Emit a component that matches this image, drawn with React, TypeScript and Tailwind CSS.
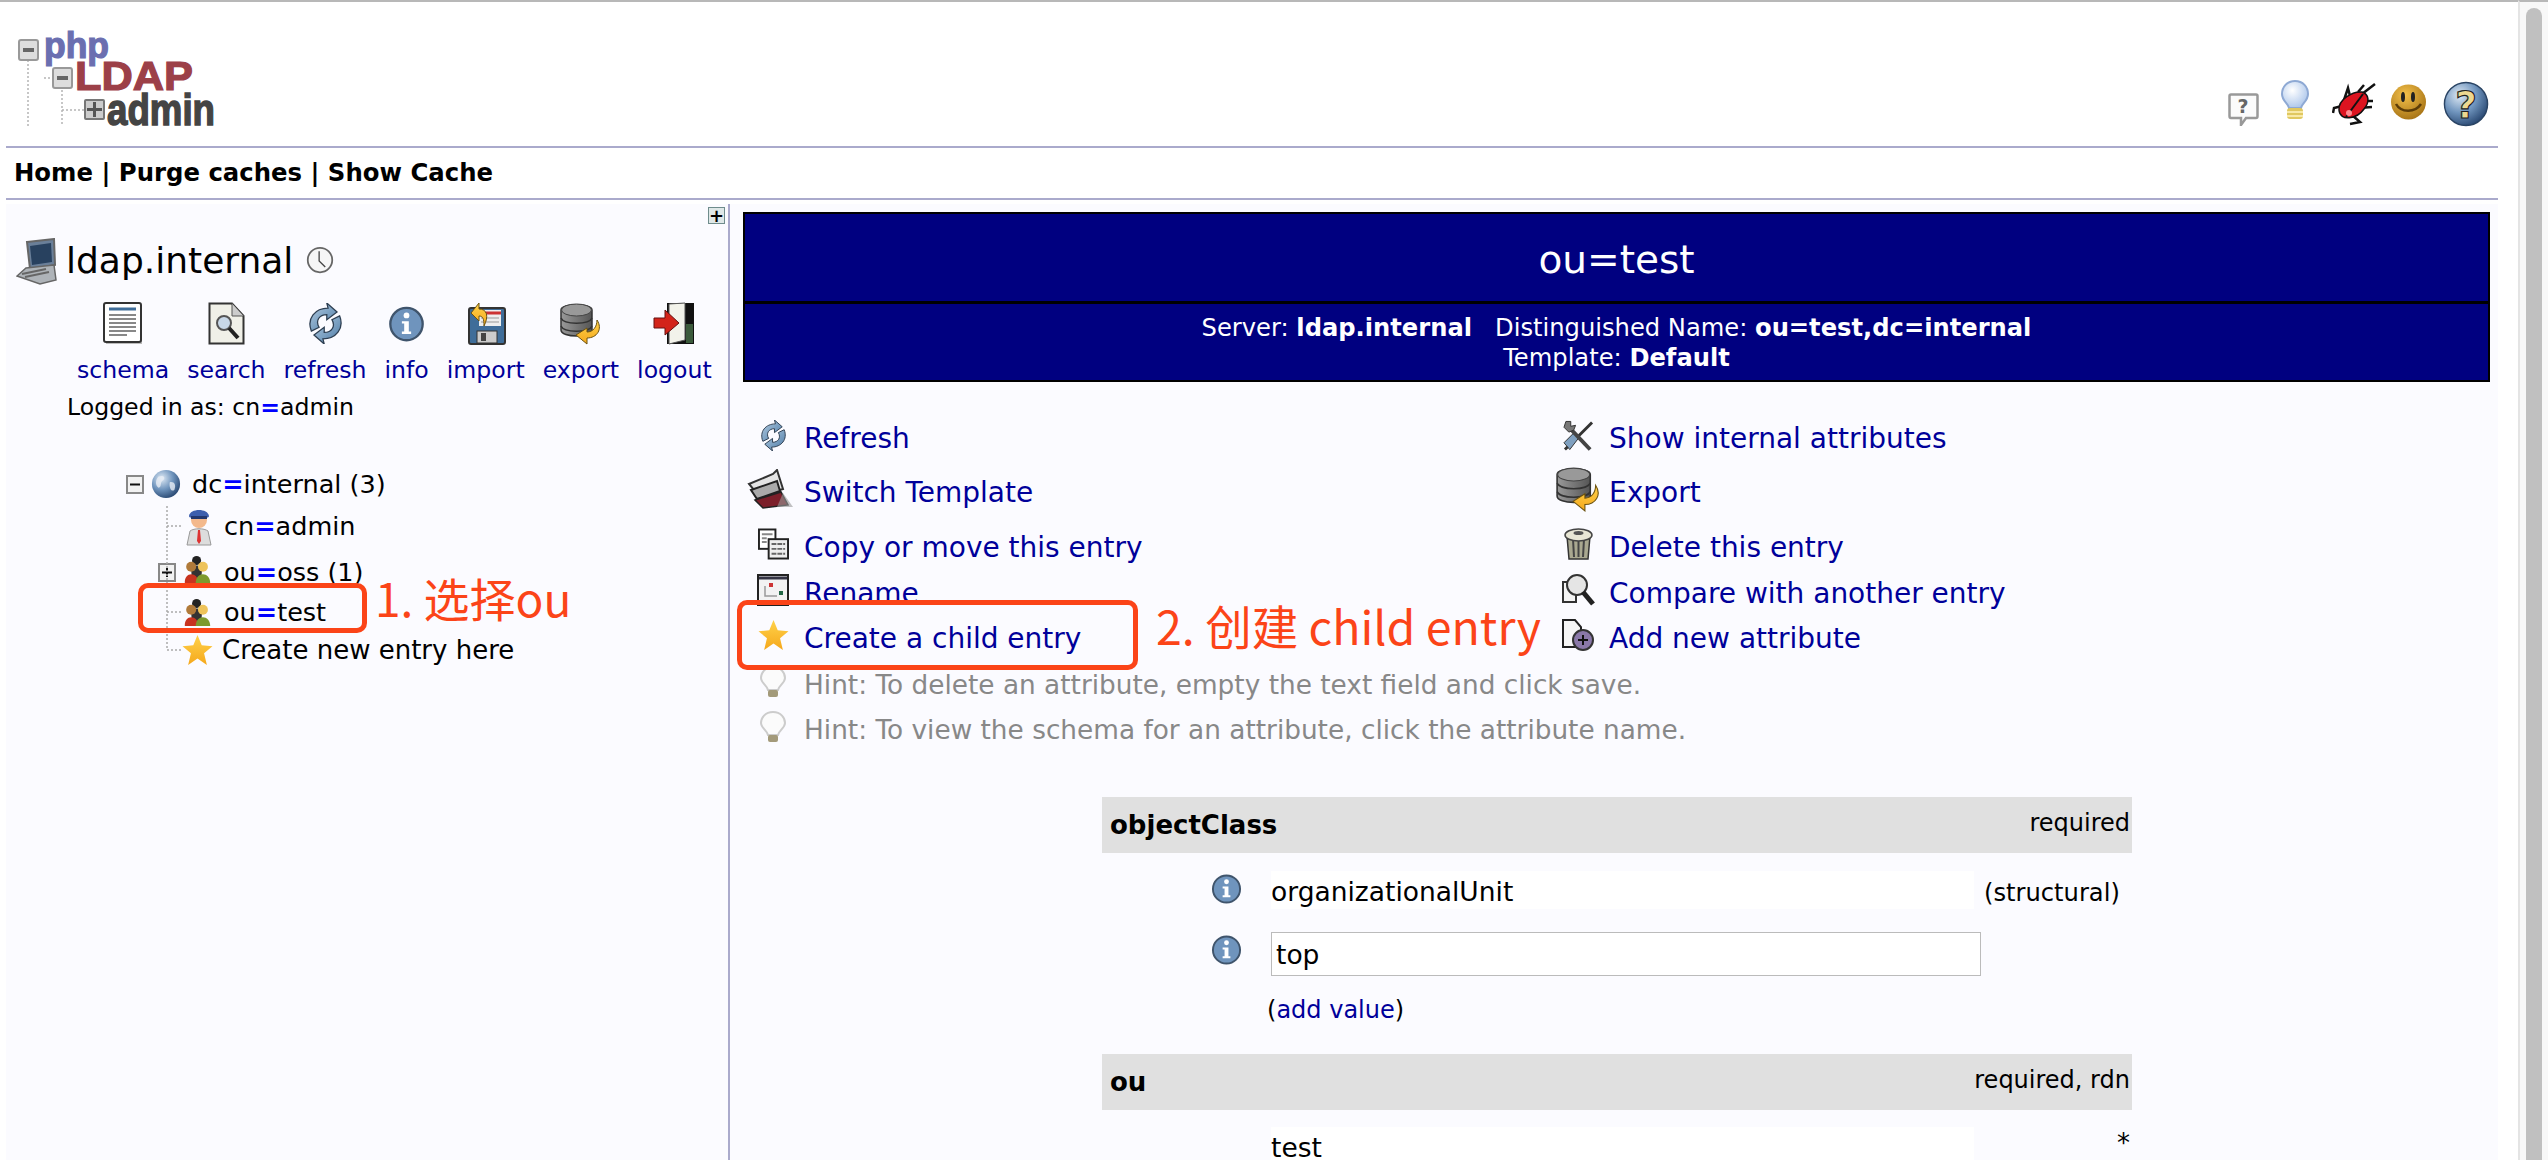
import type { ReactNode } from 'react';

const Dotted = ({ d }: { d: string }) => <path d={d} fill="none" stroke="#b5b5b5" strokeWidth="1.5" strokeDasharray="2 2" />;

function Logo() {
  return (
    <svg width="200" height="112" viewBox="0 -8 200 112" className="block">
      <Dotted d="M10 28V94M26 46H36M44 58V94M44 78H66" />
      <rect x="1" y="8" width="19" height="20" rx="2" fill="#ddd" stroke="#999" strokeWidth="2" />
      <rect x="5" y="16" width="11" height="4" fill="#666" />
      <text x="26" y="26" textLength="65" lengthAdjust="spacingAndGlyphs" fontFamily="Liberation Sans, sans-serif" fontWeight="700" fontSize="36" fill="#6b6fb0" stroke="#6b6fb0" strokeWidth="1.200">php</text>
      <rect x="35" y="36" width="19" height="20" rx="2" fill="#ddd" stroke="#999" strokeWidth="2" />
      <rect x="39" y="44" width="11" height="4" fill="#666" />
      <text x="57" y="58" textLength="118" lengthAdjust="spacingAndGlyphs" fontFamily="Liberation Sans, sans-serif" fontWeight="700" fontSize="41" fill="#9c4048" stroke="#9c4048" strokeWidth="1.200">LDAP</text>
      <rect x="67" y="68" width="19" height="19" rx="1" fill="#ccc" stroke="#777" strokeWidth="2" />
      <path d="M76.500 70V85M69 77.500H84" stroke="#555" strokeWidth="3" />
      <text x="89" y="93" textLength="108" lengthAdjust="spacingAndGlyphs" fontFamily="Liberation Sans, sans-serif" fontWeight="700" fontSize="45" fill="#444" stroke="#444" strokeWidth="1.500">admin</text>
    </svg>
  );
}

function Grads() {
  return (
    <svg width="0" height="0" className="absolute">
      <defs>
        <linearGradient id="blueG" x1="0" y1="0" x2="1" y2="1"><stop offset="0" stopColor="#b4cde2" /><stop offset="1" stopColor="#4a79a5" /></linearGradient>
        <linearGradient id="grayG" x1="0" y1="0" x2="1" y2="0"><stop offset="0" stopColor="#999" /><stop offset="1" stopColor="#555" /></linearGradient>
        <linearGradient id="goldG" x1="0" y1="0" x2="0" y2="1"><stop offset="0" stopColor="#ffd24a" /><stop offset="1" stopColor="#f5a81c" /></linearGradient>
        <radialGradient id="globeG" cx=".35" cy=".3" r=".8"><stop offset="0" stopColor="#dfeaf5" /><stop offset=".5" stopColor="#6f94bd" /><stop offset="1" stopColor="#1e3c66" /></radialGradient>
        <radialGradient id="smileG" cx=".4" cy=".3" r=".8"><stop offset="0" stopColor="#f3c04a" /><stop offset="1" stopColor="#a06c10" /></radialGradient>
        <radialGradient id="bulbG" cx=".4" cy=".35" r=".7"><stop offset="0" stopColor="#fff" /><stop offset="1" stopColor="#a9c4ea" /></radialGradient>
      </defs>
    </svg>
  );
}

const Ico = ({ w, h, vb, children, className }: { w: number; h: number; vb?: string; children: ReactNode; className?: string }) => (
  <svg width={w} height={h} viewBox={vb ?? '0 0 32 32'} className={`block shrink-0 ${className ?? ''}`}>{children}</svg>
);

const LaptopIcon = () => (
  <Ico w={41} h={47} vb="0 0 41 47">
    <path d="M11 4 38 1 39 27 14 31Z" fill="#6a7f99" stroke="#666" strokeWidth="2" />
    <path d="M14 8 35 5 36 24 16 27Z" fill="#28415f" />
    <path d="M10 30 38 27 40 42 24 46 1 38Z" fill="#aeb3b8" stroke="#666" strokeWidth="1.500" />
    <path d="M6 36 30 31M9 39 33 34" stroke="#666" strokeWidth="2" />
  </Ico>
);
const ClockIcon = () => (
  <Ico w={30} h={28}>
    <circle cx="16" cy="16" r="14" fill="#f6f6f6" stroke="#666" strokeWidth="2" />
    <path d="M15 6V17L22 24" fill="none" stroke="#444" strokeWidth="1.500" />
  </Ico>
);
const SchemaIcon = () => (
  <Ico w={41} h={43} vb="0 0 41 43">
    <rect x="3" y="3" width="36" height="39" fill="#bbb" />
    <rect x="1" y="1" width="37" height="39" rx="2" fill="#fff" stroke="#333" strokeWidth="2" />
    <path d="M6 7H33" stroke="#3f6d99" strokeWidth="3" />
    <path d="M6 13H33M6 17H33M6 21H33M6 25H33M6 29H33M6 33H24" stroke="#888" strokeWidth="2" />
  </Ico>
);
const SearchDocIcon = () => (
  <Ico w={37} h={43} vb="0 0 37 43">
    <path d="M1.500 1.500H24L35.500 14V41.500H1.500Z" fill="#f0f0e8" stroke="#333" strokeWidth="2" />
    <path d="M24 1.500V14H35.500" fill="#ccc" stroke="#555" />
    <circle cx="16" cy="21" r="7" fill="#c8d8e8" stroke="#555" strokeWidth="2" />
    <path d="M21 26 30 36" stroke="#222" strokeWidth="4" />
  </Ico>
);
const RefreshIcon = ({ w = 41, h = 41 }: { w?: number; h?: number }) => (
  <Ico w={w} h={h}>
    <path d="M5 22C1 12 8 4 18 4L17 0 25 7 17 13 17 9C11 9 8 14 11 19Z" fill="url(#blueG)" stroke="#2e3f52" strokeWidth="1" />
    <path d="M27 10C31 20 24 28 14 28L15 32 7 25 15 19 15 23C21 23 24 18 21 13Z" fill="url(#blueG)" stroke="#2e3f52" strokeWidth="1" />
  </Ico>
);
const InfoIcon = ({ w = 37, h = 37 }: { w?: number; h?: number }) => (
  <Ico w={w} h={h}>
    <circle cx="16" cy="16.500" r="14" fill="#6f94bd" stroke="#3f546c" strokeWidth="2" />
    <circle cx="16" cy="9" r="2.500" fill="#fff" />
    <path d="M12 14H18V23H20V25H12V23H14V16H12Z" fill="#fff" />
  </Ico>
);
const ImportIcon = () => (
  <Ico w={42} h={43} vb="0 0 42 43">
    <rect x="4" y="6" width="36" height="36" rx="2" fill="#3f6d99" stroke="#333" strokeWidth="2" />
    <rect x="14" y="8" width="22" height="16" fill="#eee" />
    <path d="M14 11H36" stroke="#c33" strokeWidth="3" />
    <path d="M16 16H34M16 20H34" stroke="#999" />
    <rect x="12" y="29" width="20" height="12" fill="#ccc" stroke="#333" />
    <rect x="16" y="31" width="5" height="8" fill="#444" />
    <path d="M6 11 14 1 14 7C22 7 24 14 19 24 19 17 18 14 14 14V19Z" fill="url(#goldG)" stroke="#6b5210" strokeWidth="1" />
  </Ico>
);
const ExportIcon = ({ w = 42, h = 43 }: { w?: number; h?: number }) => (
  <Ico w={w} h={h} vb="0 0 42 43">
    <path d="M1 8C1 1 32 1 32 8V28C32 36 1 36 1 28Z" fill="url(#grayG)" stroke="#333" strokeWidth="1.500" />
    <ellipse cx="16.500" cy="8" rx="15" ry="6" fill="#999" stroke="#444" />
    <path d="M1 16C4 23 29 23 32 16M1 24C4 31 29 31 32 24" fill="none" stroke="#333" strokeWidth="1.500" />
    <path d="M37 18C43 27 37 36 27 36V42L16 33 27 26V30C33 30 37 25 37 18Z" fill="url(#goldG)" stroke="#6b5210" strokeWidth="1" />
  </Ico>
);
const LogoutIcon = () => (
  <Ico w={42} h={43} vb="0 0 42 43">
    <rect x="14" y="1" width="27" height="41" fill="#111" />
    <path d="M16 2 32 1V38L16 42Z" fill="#f2f2ea" stroke="#555" />
    <path d="M33 22H40V41H33Z" fill="#3b5a3b" />
    <path d="M1 16H12V8L26 21 12 33V26H1Z" fill="#d3241a" stroke="#611" />
  </Ico>
);
const BoxIcon = ({ plus }: { plus?: boolean }) => (
  <Ico w={18} h={19} vb="0 0 18 19">
    <rect x="1" y="1" width="16" height="17" fill="#f2f2f2" stroke="#888" strokeWidth="2" />
    <path d={plus ? 'M4 9.500H14M9 5V14' : 'M4 9.500H14'} stroke="#111" strokeWidth="2" />
  </Ico>
);
const GlobeIcon = () => (
  <Ico w={30} h={30}>
    <circle cx="16" cy="16" r="15" fill="url(#globeG)" />
    <path d="M8 8C13 6 16 9 13 12 9 14 12 19 8 20 4 17 5 11 8 8ZM20 14C25 13 27 17 25 22 22 25 19 20 20 14Z" fill="#e8eef5" opacity=".8" />
  </Ico>
);
const PersonIcon = () => (
  <Ico w={26} h={39} vb="0 0 26 39">
    <path d="M4 24C8 21 18 21 22 24L25 38H1Z" fill="#ddd" stroke="#999" />
    <path d="M12 23H14L15 34 13 37 11 34Z" fill="#d33" />
    <circle cx="13" cy="13" r="8" fill="#f3b98c" />
    <path d="M3 9C4 1 22 1 23 9 23 12 18 10 13 10 8 10 3 12 3 9Z" fill="#3d5fae" />
    <rect x="5" y="9" width="16" height="3" fill="#23386f" />
  </Ico>
);
const PeopleIcon = () => (
  <Ico w={29} h={29}>
    <circle cx="15" cy="6" r="5" fill="#222" />
    <path d="M9 16C9 10 21 10 21 16L20 28H10Z" fill="#333" />
    <circle cx="9" cy="13" r="5.500" fill="#b07a3a" />
    <path d="M2 31C1 18 17 18 17 31Z" fill="#c8331f" />
    <circle cx="22" cy="13" r="5.500" fill="#eec35a" />
    <path d="M14 31C14 18 30 18 30 31Z" fill="#7d9a2d" />
  </Ico>
);
const StarIcon = () => (
  <Ico w={31} h={30}>
    <path d="M16 0 20.500 11 32 12 23 19.500 26 32 16 25 6 32 9 19.500 0 12 11.500 11Z" fill="url(#goldG)" />
  </Ico>
);
const TemplateIcon = () => (
  <Ico w={47} h={40} vb="0 0 47 40" className="-ml-[5px]">
    <path d="M2 15 26 5 30 1 36 20 12 27Z" fill="#e4e4e4" stroke="#333" strokeWidth="2" />
    <path d="M4 21 30 12 33 22 10 30Z" fill="#aaa" stroke="#222" strokeWidth="2" />
    <path d="M8 31 34 23 41 36 16 39Z" fill="#7c1f2a" stroke="#222" strokeWidth="1.500" />
    <path d="M36 24 46 38H30Z" fill="#999" opacity=".6" />
  </Ico>
);
const CopyIcon = () => (
  <Ico w={31} h={32}>
    <rect x="1" y="1" width="17" height="20" fill="#fff" stroke="#222" strokeWidth="2" />
    <path d="M4 6H15M4 10H9M4 14H9" stroke="#888" strokeWidth="2" />
    <rect x="11" y="11" width="20" height="20" fill="#eee" stroke="#222" strokeWidth="2" />
    <path d="M14 16H28M14 21H28M14 26H28" stroke="#666" strokeWidth="2" strokeDasharray="5 1" />
  </Ico>
);
const RenameIcon = () => (
  <Ico w={32} h={32}>
    <rect x="1" y="1" width="30" height="30" fill="#f2f2f2" stroke="#222" strokeWidth="2" />
    <path d="M2 4H30" stroke="#334" strokeWidth="3" />
    <rect x="12" y="9" width="4" height="4" fill="#c33" />
    <rect x="22" y="17" width="4" height="4" fill="#264" />
    <path d="M8 12V22H20" fill="none" stroke="#999" strokeWidth="1.500" />
  </Ico>
);
const BulbIcon = () => (
  <Ico w={26} h={32} vb="0 0 26 32">
    <path d="M13 1C5 1 1 7 1 12 1 17 7 19 8 24H18C19 19 25 17 25 12 25 7 21 1 13 1Z" fill="#fbfbfb" stroke="#ccc" strokeWidth="2" />
    <rect x="8" y="24" width="10" height="7" rx="2" fill="#a39a7a" />
  </Ico>
);
const ToolsIcon = () => (
  <Ico w={31} h={32}>
    <path d="M2 31 30 3" stroke="#333" strokeWidth="3" />
    <path d="M1 24 12 13 17 18 7 31Z" fill="#7fa0c0" stroke="#333" />
    <path d="M28 31 8 10" stroke="#444" strokeWidth="4" />
    <path d="M8 2 3 2 1 8 6 13 11 11 13 6 8 7Z" fill="#777" stroke="#333" />
  </Ico>
);
const TrashIcon = () => (
  <Ico w={29} h={32} vb="0 0 29 32">
    <path d="M3 8H26L24 31H5Z" fill="#a9a890" stroke="#333" strokeWidth="1.500" />
    <path d="M9 11 10 29M14.500 11V29M20 11 19 29" stroke="#444" strokeWidth="2" />
    <ellipse cx="14.500" cy="7" rx="13.500" ry="6" fill="#e8e6d5" stroke="#444" strokeWidth="1.500" />
    <ellipse cx="14.500" cy="5" rx="5" ry="2" fill="#555" />
  </Ico>
);
const CompareIcon = () => (
  <Ico w={33} h={32} vb="0 0 33 32">
    <path d="M1 8H14V28H1Z" fill="#f4f4f4" stroke="#333" strokeWidth="2" />
    <circle cx="15" cy="11" r="10" fill="#e5e5e5" stroke="#333" strokeWidth="2" />
    <path d="M21 18 31 30" stroke="#222" strokeWidth="5" />
  </Ico>
);
const AddAttrIcon = () => (
  <Ico w={33} h={32} vb="0 0 33 32">
    <path d="M1 1H13L19 8V28H1Z" fill="#f6f6f6" stroke="#222" strokeWidth="2" />
    <circle cx="21" cy="21" r="10" fill="#8a78a8" stroke="#333" strokeWidth="2" />
    <path d="M16 21H26M21 16V26" stroke="#111" strokeWidth="2" />
  </Ico>
);
const BubbleIcon = () => (
  <Ico w={31} h={33} vb="0 0 31 33">
    <path d="M3 1.500H28Q29.500 1.500 29.500 3V23Q29.500 25 28 25H18L13 32V25H3Q1.500 25 1.500 23V3Q1.500 1.500 3 1.500Z" fill="#fbfbfb" stroke="#999" strokeWidth="2.500" />
    <text x="15" y="20" textAnchor="middle" fontFamily="DejaVu Sans, sans-serif" fontWeight="700" fontSize="19" fill="#666">?</text>
  </Ico>
);
const LampIcon = () => (
  <Ico w={28} h={42} vb="0 0 28 42">
    <path d="M14 1C6 1 1 7 1 14 1 21 7 23 8 28H20C21 23 27 21 27 14 27 7 22 1 14 1Z" fill="url(#bulbG)" stroke="#8ea9d4" strokeWidth="2" />
    <rect x="6" y="28" width="16" height="11" rx="3" fill="#e0c860" />
    <path d="M6 32H22M6 36H22" stroke="#fff4c0" strokeWidth="1.500" />
  </Ico>
);
const BugIcon = () => (
  <Ico w={44} h={44} vb="0 0 44 44">
    <path d="M30 12 43 2M26 10 32 3M12 18 16 6 18 14M10 24 2 26 1 31M26 26 40 25M20 33 28 40 18 42M32 19 41 19" fill="none" stroke="#111" strokeWidth="2.500" />
    <path d="M7 28C6 18 20 9 30 10 37 12 38 20 32 27 25 37 8 40 7 28Z" fill="#dc1420" stroke="#111" strokeWidth="1.500" />
    <path d="M14 35 31 12" stroke="#111" strokeWidth="2" />
    <circle cx="17" cy="31" r="3" fill="#ff8a90" />
  </Ico>
);
const SmileIcon = () => (
  <Ico w={37} h={38} vb="0 0 37 38">
    <circle cx="18.500" cy="18" r="17.500" fill="url(#smileG)" />
    <ellipse cx="13" cy="13" rx="2" ry="5" fill="#222" />
    <ellipse cx="23" cy="13" rx="2" ry="5" fill="#222" />
    <path d="M6 20C11 29 25 29 31 20" fill="none" stroke="#5c3c08" strokeWidth="2.500" />
  </Ico>
);
const HelpIcon = () => (
  <Ico w={46} h={46}>
    <circle cx="16" cy="16" r="15" fill="url(#globeG)" stroke="#2a4464" strokeWidth="1" />
    <text x="16" y="26" textAnchor="middle" fontFamily="DejaVu Sans, sans-serif" fontWeight="700" fontSize="26" fill="#eed890" stroke="#222" strokeWidth=".8">?</text>
  </Ico>
);

const Eq = () => <span className="text-[#0000ff] font-bold">=</span>;

const tools: [ReactNode, string][] = [
  [<SchemaIcon />, 'schema'],
  [<SearchDocIcon />, 'search'],
  [<RefreshIcon />, 'refresh'],
  [<InfoIcon />, 'info'],
  [<ImportIcon />, 'import'],
  [<ExportIcon />, 'export'],
  [<LogoutIcon />, 'logout'],
];

function Action({ icon, label, className }: { icon: ReactNode; label: string; className?: string }) {
  return (
    <div className={`flex h-[46px] items-center ${className ?? ''}`}>
      <div className="flex w-[62px] shrink-0 justify-center -mt-[8px]">{icon}</div>
      <a className="text-[#00009a] text-[28px] leading-none">{label}</a>
    </div>
  );
}

function Hint({ children, className }: { children: ReactNode; className?: string }) {
  return (
    <div className={`flex h-[46px] items-center text-[#888] text-[26.350px] ${className ?? ''}`}>
      <div className="flex w-[62px] shrink-0 justify-center -mt-[8px]"><BulbIcon /></div>
      {children}
    </div>
  );
}

function AttrHead({ name, note, noteClass }: { name: string; note: string; noteClass: string }) {
  return (
    <div className="flex h-[56px] items-center justify-between bg-[#e0e0e0] pl-[8px] pr-[2px]">
      <b className="text-[26px]">{name}</b>
      <span className={`text-[24px] ${noteClass}`}>{note}</span>
    </div>
  );
}

export default function App() {
  return (
    <div className="relative flex h-[1160px] w-[2548px] overflow-hidden bg-white text-black font-['DejaVu_Sans',Verdana,sans-serif]">
      <Grads />
      <div className="w-[2518px] border-t-2 border-[#b8b8b8]">
        <div className="ml-[6px] w-[2492px]">
          <div className="flex h-[146px] items-start justify-between border-b-2 border-[#aaaacc]">
            <div className="ml-[12px] mt-[22px]"><Logo /></div>
            <div className="mt-[78px] mr-[9px] flex items-end">
              <div className="mb-[1px] mr-[22px]"><BubbleIcon /></div>
              <div className="mb-[5px] mr-[23px]"><LampIcon /></div>
              <div className="mb-[1px] mr-[14px]"><BugIcon /></div>
              <div className="mb-[5px] mr-[16px]"><SmileIcon /></div>
              <HelpIcon />
            </div>
          </div>
          <div className="flex h-[52px] items-center border-b-2 border-[#aaaacc] pl-[8px] text-[24.350px] font-bold whitespace-nowrap">
            Home | Purge caches | Show Cache
          </div>
          <div className="mt-[4px] flex h-[960px] bg-[#fbfbff]">
            <div className="w-[724px] shrink-0 border-r-2 border-[#aaaacc] text-[23.600px]">
              <div className="flex justify-end pt-[3px] pr-[3px]">
                <div className="flex h-[17px] w-[17px] items-center justify-center border border-[#6f8c8c] bg-[#dfe8e8] text-[18px] font-bold leading-none">+</div>
              </div>
              <div className="ml-[10px] mt-[14px] flex h-[47px] items-center">
                <LaptopIcon />
                <span className="ml-[9px] text-[36px] leading-none -mt-[2px]">ldap.internal</span>
                <span className="ml-[12px] -mt-[4px]"><ClockIcon /></span>
              </div>
              <div className="ml-[71px] mt-[17px] flex gap-[18px]">
                {tools.map(([icon, label]) => (
                  <a key={label} className="flex flex-col items-center text-[#00009a]">
                    <div className="flex h-[43px] items-center">{icon}</div>
                    <span className="mt-[11px] leading-[28px]">{label}</span>
                  </a>
                ))}
              </div>
              <div className="ml-[61px] mt-[9px] leading-[28px]">Logged in as: cn<Eq />admin</div>
              <div className="mt-[44px] whitespace-nowrap text-[25.500px]">
                <div className="ml-[120px] flex h-[38px] items-center">
                  <BoxIcon />
                  <div className="ml-[7px] mr-[11px]"><GlobeIcon /></div>
                  <span>dc<Eq />internal (3)</span>
                </div>
                <div className="ml-[180px] flex h-[46px] items-center">
                  <div className="mr-[12px]"><PersonIcon /></div>
                  <span>cn<Eq />admin</span>
                </div>
                <div className="ml-[152px] flex h-[46px] items-center">
                  <BoxIcon plus />
                  <div className="ml-[7px] mr-[12px] -mt-[6px]"><PeopleIcon /></div>
                  <span>ou<Eq />oss (1)</span>
                </div>
                <div className="ml-[177px] flex h-[34px] items-center">
                  <div className="mr-[12px]"><PeopleIcon /></div>
                  <span>ou<Eq />test</span>
                </div>
                <div className="ml-[176px] flex h-[42px] items-center">
                  <div className="mr-[9px]"><StarIcon /></div>
                  <span className="text-[26px]">Create new entry here</span>
                </div>
              </div>
            </div>
            <div className="min-w-0 flex-1">
              <div className="ml-[13px] mr-[8px] mt-[8px] h-[170px] border-2 border-black bg-[#000080] text-center text-white">
                <div className="flex h-[90px] items-center justify-center border-b-[3px] border-black pt-[5px] text-[39px]">ou=test</div>
                <div className="pt-[9px] text-[24.200px] leading-[30px]">
                  <div>Server: <b>ldap.internal</b> &nbsp; Distinguished Name: <b>ou=test,dc=internal</b></div>
                  <div>Template: <b>Default</b></div>
                </div>
              </div>
              <div className="mt-[34px] flex items-start pl-[12px] whitespace-nowrap">
                <div className="w-[805px]">
                  <Action icon={<RefreshIcon w={31} h={31} />} label="Refresh" />
                  <Action icon={<TemplateIcon />} label="Switch Template" className="mt-[8px]" />
                  <Action icon={<CopyIcon />} label="Copy or move this entry" className="mt-[9px]" />
                  <Action icon={<RenameIcon />} label="Rename" />
                  <Action icon={<StarIcon />} label="Create a child entry" className="-mt-[1px]" />
                  <Hint className="mt-[1px]">Hint: To delete an attribute, empty the text field and click save.</Hint>
                  <Hint className="-mt-[1px]">Hint: To view the schema for an attribute, click the attribute name.</Hint>
                </div>
                <div>
                  <Action icon={<ToolsIcon />} label="Show internal attributes" />
                  <Action icon={<ExportIcon w={47} h={46} />} label="Export" className="mt-[8px]" />
                  <Action icon={<TrashIcon />} label="Delete this entry" className="mt-[9px]" />
                  <Action icon={<CompareIcon />} label="Compare with another entry" />
                  <Action icon={<AddAttrIcon />} label="Add new attribute" className="-mt-[1px]" />
                </div>
              </div>
              <div className="ml-[372px] mt-[43px] w-[1030px] text-[26.500px]">
                <AttrHead name="objectClass" note="required" noteClass="-mt-[5px]" />
                <div className="flex pt-[18px]">
                  <div className="ml-[109px] w-[60px] pt-[2px]"><InfoIcon w={31} h={31} /></div>
                  <div className="flex h-[38px] w-[703px] items-center bg-white pt-[3px]">organizationalUnit</div>
                  <span className="ml-[10px] mt-[4px] text-[24.200px]">(structural)</span>
                </div>
                <div className="flex pt-[21px]">
                  <div className="ml-[109px] w-[60px] pt-[2px]"><InfoIcon w={31} h={31} /></div>
                  <div className="flex h-[44px] w-[710px] items-center border border-[#bbb] bg-white pl-[4px] pt-[2px]">top</div>
                </div>
                <div className="ml-[165px] mt-[19px] text-[24px] leading-[30px]">(<a className="text-[#00009a]">add value</a>)</div>
                <div className="mt-[29px]"><AttrHead name="ou" note="required, rdn" noteClass="-mt-[4px]" /></div>
                <div className="flex pt-[17px]">
                  <div className="ml-[169px] flex h-[38px] w-[703px] items-center bg-white pt-[4px]">test</div>
                  <span className="ml-auto mr-[2px] -mt-[3px] text-[26px] leading-[38px]">*</span>
                </div>
              </div>
            </div>
          </div>
        </div>
      </div>
      <div className="flex flex-1 border-t-2 border-l-2 border-l-[#e4e4e4] border-t-[#b8b8b8] bg-[#f8f8f8] pl-[6px] pt-[6px]">
        <div className="h-[1200px] w-[16px] rounded-t-full bg-[#c0c0c0]" />
      </div>

      {/* tree connectors */}
      <svg width="60" height="160" className="absolute left-[150px] top-[500px]">
        <path d="M17 6V150H32M17 26H32M17 112H32" fill="none" stroke="#aaa" strokeWidth="1.500" strokeDasharray="2 2" />
      </svg>

      <div className="absolute left-[138px] top-[583px] h-[50px] w-[229px] rounded-[10px] border-[5px] border-[#fb4418]" />
      <div className="absolute left-[375px] top-[567px] whitespace-nowrap font-['Noto_Sans_CJK_SC',sans-serif] text-[46px] leading-[60px] text-[#fb4418]">1. 选择ou</div>
      <div className="absolute left-[737px] top-[600px] h-[70px] w-[401px] rounded-[10px] border-[5px] border-[#fb4418]" />
      <div className="absolute left-[1156px] top-[595px] whitespace-nowrap font-['Noto_Sans_CJK_SC',sans-serif] text-[46.500px] leading-[60px] text-[#fb4418]">2. 创建 child entry</div>
    </div>
  );
}
